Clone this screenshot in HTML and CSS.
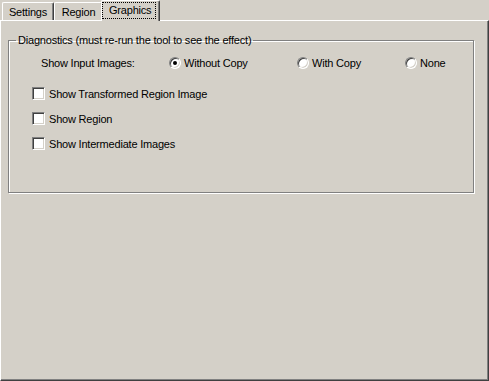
FILE: index.html
```html
<!DOCTYPE html>
<html lang="en">
<head>
    <meta charset="UTF-8">
    <title>Graphics</title>
    <link rel="stylesheet" href="styles.css">
</head>
<body>
    <div class="tabs">
        <div class="tab tab-settings">Settings</div>
        <div class="tab tab-region">Region</div>
        <div class="tab tab-graphics active"><span class="focus">Graphics</span></div>
    </div>
    <div class="panel">
        <fieldset class="group">
            <legend>Diagnostics (must re-run the tool to see the effect)</legend>
            <div class="radio-row">
                <span class="row-label">Show Input Images:</span>
                <span class="option opt-without"><span class="radio checked"></span>Without Copy</span>
                <span class="option opt-with"><span class="radio"></span>With Copy</span>
                <span class="option"><span class="radio"></span>None</span>
            </div>
            <div class="checks">
                <div class="check-row"><span class="checkbox"></span>Show Transformed Region Image</div>
                <div class="check-row"><span class="checkbox"></span>Show Region</div>
                <div class="check-row"><span class="checkbox"></span>Show Intermediate Images</div>
            </div>
        </fieldset>
    </div>
</body>
</html>
```

FILE: styles.css
```css
body {
    margin: 0;
    background: #d4d0c8;
    font-family: "Liberation Sans", Arial, sans-serif;
    font-size: 11px;
    letter-spacing: -0.2px;
    color: #000;
    width: 489px;
    height: 381px;
    overflow: hidden;
}
.tabs {
    display: flex;
    height: 20px;
    padding-left: 2px;
}
.tab {
    box-sizing: border-box;
    margin-top: 2px;
    height: 18px;
    line-height: 18px;
    text-align: center;
    border-top: 1px solid #fff;
    border-left: 1px solid #fff;
    border-right: 1px solid #404040;
    box-shadow: inset -1px 0 #808080;
    border-top-left-radius: 2px;
    border-top-right-radius: 2px;
    background: #d4d0c8;
}
.tab-settings {
    width: 52px;
}
.tab-region {
    width: 49px;
}
.tab.active {
    position: relative;
    z-index: 1;
    margin-top: 0;
    margin-left: -2px;
    height: 21px;
    width: 59px;
    padding-top: 1px;
    line-height: 16px;
    text-align: left;
}
.focus {
    display: inline-block;
    margin-left: 1px;
    padding: 0 4px 0 6px;
    line-height: 15px;
    outline: 1px dotted #000;
}
.panel {
    box-sizing: border-box;
    height: 361px;
    border-top: 1px solid #fff;
    border-left: 1px solid #fff;
    border-right: 1px solid #404040;
    border-bottom: 1px solid #404040;
    box-shadow: inset -1px -1px #808080;
    padding: 13px 14px 0 7px;
}
.group {
    margin: 0;
    padding: 0 0 34px 0;
    height: 159px;
    box-sizing: border-box;
    border: 1px solid #808080;
    box-shadow: 1px 1px 0 #fff, inset 1px 1px 0 #fff;
}
.group legend {
    margin-left: 7px;
    padding: 0 2px;
    line-height: 13px;
}
.radio-row {
    display: flex;
    align-items: center;
    height: 24px;
    margin-top: 4px;
    padding-left: 32px;
}
.row-label {
    width: 128px;
}
.option {
    display: flex;
    align-items: center;
    gap: 3px;
}
.opt-without {
    width: 128px;
}
.opt-with {
    width: 108px;
}
.radio {
    position: relative;
    box-sizing: border-box;
    width: 12px;
    height: 12px;
    border-radius: 50%;
    background: #fff;
    border: 1px solid;
    border-color: #808080 #fff #fff #808080;
    box-shadow: inset 1px 1px #404040, inset -1px -1px #d4d0c8;
}
.radio.checked::after {
    content: "";
    position: absolute;
    left: 3px;
    top: 3px;
    width: 4px;
    height: 4px;
    border-radius: 50%;
    background: #000;
}
.checks {
    margin-top: 6px;
    padding-left: 23px;
}
.check-row {
    display: flex;
    align-items: center;
    gap: 4px;
    height: 25px;
}
.checkbox {
    box-sizing: border-box;
    width: 13px;
    height: 13px;
    background: #fff;
    border: 1px solid;
    border-color: #808080 #fff #fff #808080;
    box-shadow: inset 1px 1px #404040, inset -1px -1px #d4d0c8;
}
```
